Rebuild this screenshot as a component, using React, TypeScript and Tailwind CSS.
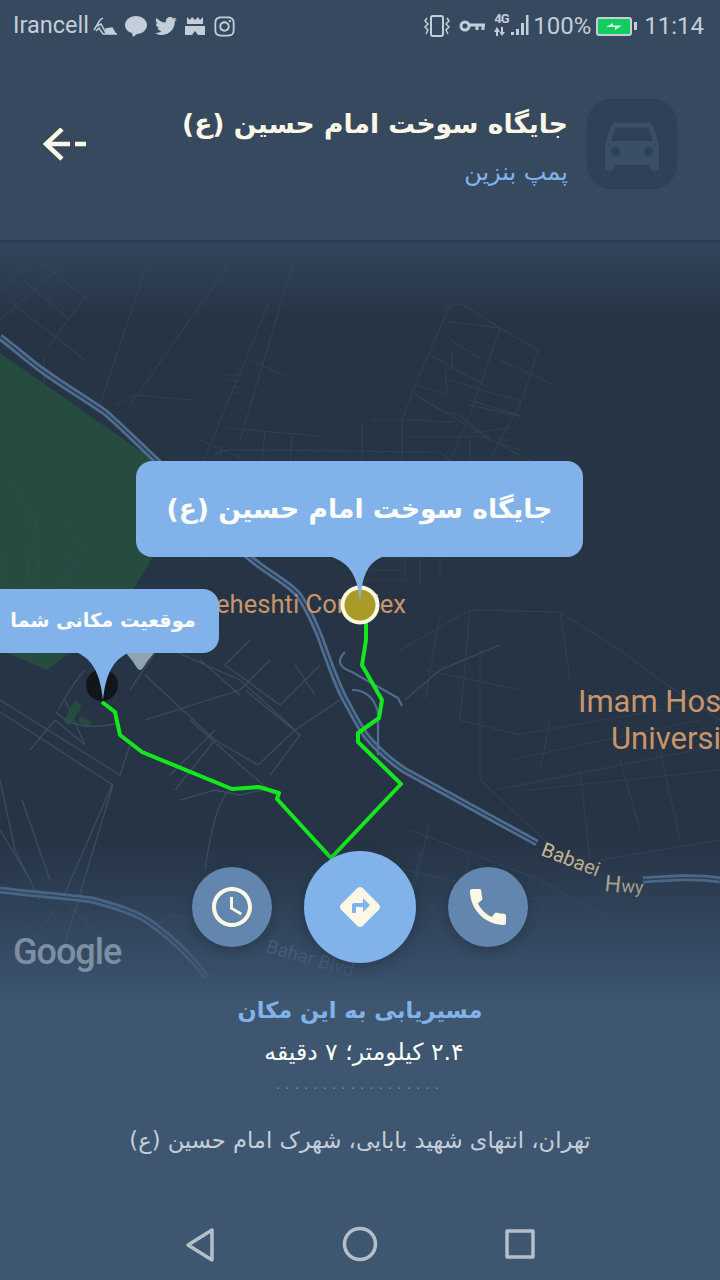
import { MdAccessTime, MdCall, MdDirections, MdDirectionsCar } from "react-icons/md";
import { FaInstagram, FaTwitter } from "react-icons/fa";

const farsi = "font-['DejaVu_Sans',sans-serif]";
const latin = "font-['Roboto',sans-serif]";

const faintRoads = [
  "M0 320 L88 243 M0 290 L50 240 M8 300 L85 360 M24 280 L70 320 M40 262 L88 300 M46 350 L90 290",
  "M44 355 L44 392 M100 405 L145 270 L175 240 M130 405 L225 270 L225 240 M115 405 L135 395 L192 400",
  "M200 470 L270 300 M240 440 L300 240 M200 440 L245 460 M212 480 L262 510 M220 445 L228 500 L205 560",
  "M225 375 L245 375 M228 380 L240 382 M230 386 L240 388 M232 392 L238 394 M250 360 L290 378",
  "M228 428 L318 436 M265 432 L262 461 M292 436 L290 461 M215 455 Q225 448 240 450 L440 452 L455 465",
  "M362 422 L362 462 M372 420 L402 420 L402 461 M402 420 L415 385 L450 305 L462 304 L500 328 L538 350 L522 400 L490 460",
  "M450 322 L500 328 L470 415 L450 460 M450 340 L480 358 M415 385 L448 395 L445 372 L452 368 L452 350",
  "M415 395 L440 410 L460 415 L490 440 L520 450 M413 393 L500 445 L530 460 L530 470 M470 433 L510 428 M468 400 L520 415",
  "M430 355 L490 388 M450 380 L498 395 M470 405 L520 416 M498 395 L520 400 L520 410 M498 440 L510 440",
  "M405 492 L510 490 M405 420 L455 422 M406 437 L490 437 M500 360 L552 384 M405 530 L440 530 M405 555 L405 580 M440 555 L440 580",
  "M470 440 L470 462 M380 558 L420 558 L420 585 M365 580 L405 580 M365 570 L405 570 M400 650 L470 610 L560 612 L620 650",
  "M440 615 L425 700 M470 610 L460 720 L520 735 M620 650 L660 680 L720 720 M560 612 L570 680 M425 670 L520 690 M515 735 L720 700",
  "M480 650 L480 780 L555 850 M550 720 L540 770 M510 760 L700 720 M495 790 L720 745 M530 790 L720 770 M580 770 L590 860",
  "M620 760 L640 830 M660 750 L680 840 M600 860 L720 840 M410 830 L540 880 L610 920 M420 850 L410 900 M430 820 L400 950",
  "M360 860 L540 900 M470 850 L460 910 M0 960 L40 930 L70 890 M20 920 L70 970 M65 900 L120 960 M155 925 L175 915 L260 945",
];

const blockRoads = [
  "M0 700 L120 775 L130 745 M0 712 L113 785 L60 960 M112 785 L62 900 M65 700 L85 745 M30 750 L55 720 L85 745",
  "M130 690 L160 645 L240 680 L295 730 L340 700 M145 675 L215 740 L175 790 M215 740 L258 765 L295 730 M250 640 L225 665 L280 705 L320 665",
  "M145 720 L240 690 L270 660 M245 690 L300 735 L270 775 M170 775 L215 730 M190 720 L240 765 L275 795 M200 660 L240 695 M295 665 L315 695",
  "M180 800 L215 790 L240 795 L262 790 M230 790 Q215 800 205 870 M0 780 L15 850 L40 900 M0 830 L30 880 M22 800 L50 880",
  "M405 700 L440 670 L500 645",
];

const highway =
  "M0 337 C20 352 30 362 46 373 C70 390 88 400 106 413 C125 430 140 445 156 460 C190 495 220 530 250 558 C275 578 292 585 300 597 C310 612 315 625 320 637 C330 665 338 688 347 703 C354 716 360 728 367 737 C380 752 392 762 404 770 L537 843 M643 880 C670 878 695 876 720 880 M0 890 C30 894 65 896 92 900 C115 906 135 912 151 923 C175 940 192 958 207 977";

function MapLayer() {
  return (
    <svg className="absolute inset-0" width="720" height="1280" viewBox="0 0 720 1280">
      <rect width="720" height="1280" fill="#263445" />
      <path d="M0 353 L156 462 L153 557 L133 590 L120 615 L47 670 L0 650 Z" fill="#254c3e" />
      <path d="M0 470 Q30 500 33 540 Q20 590 40 640 M28 500 Q50 560 30 610 M70 520 Q80 560 50 600 Q30 630 20 650 M90 540 Q60 590 30 660 M0 550 Q15 590 5 640" fill="none" stroke="#2f4a4c" strokeWidth="1.5" />
      <path d={faintRoads.join(" ")} fill="none" stroke="#304053" strokeWidth="1.2" />
      <path d={blockRoads.join(" ")} fill="none" stroke="#3a4c61" strokeWidth="1.3" />
      <path d={highway} fill="none" stroke="#4f6d90" strokeWidth="7" />
      <path d={highway} fill="none" stroke="#2b3b4f" strokeWidth="1.6" />
      <path d="M345 652 Q332 665 352 672 L398 698 L402 706 M352 690 Q372 690 378 712 L378 755" fill="none" stroke="#4f6d90" strokeWidth="2.2" />
      <path d="M63 722 L75 700 L82 706 L70 726 Z M80 716 L92 722 L88 728 L78 722 Z" fill="#254c3e" />
      <path d="M58 710 Q75 680 85 670 M56 712 Q75 732 115 724" fill="none" stroke="#3a4c61" strokeWidth="1.3" />
      <text x="216" y="613" fill="#c9956a" fontSize="25.6" fontFamily="Roboto, sans-serif">eheshti Complex</text>
      <text fill="#c9956a" fontSize="31" fontFamily="Roboto, sans-serif">
        <tspan x="578" y="712">Imam Hos</tspan>
        <tspan x="611" y="749">Universi</tspan>
      </text>
      <text x="0" y="0" fill="#d3bd95" fontSize="20" fontFamily="Roboto, sans-serif" transform="translate(540 855) rotate(21)">Babaei</text>
      <text x="604" y="891" fill="#d3bd95" fontSize="23" fontFamily="Roboto, sans-serif" transform="rotate(6 604 891)">H</text>
      <text x="621" y="892" fill="#d3bd95" fontSize="18" fontFamily="Roboto, sans-serif" transform="rotate(4 621 892)">wy</text>
      <text x="265" y="952" fill="#566b82" fontSize="19" fontFamily="Roboto, sans-serif" transform="rotate(16 265 952)">Bahar Blvd</text>
      <path d="M126 653 L154 653 Q147 661 143 668 Q140 672 137 668 Q133 661 126 653 Z" fill="#8fa3b3" />
      <polyline
        points="366,622 366,640 362,665 382,700 379,718 358,733 358,742 401,784 331,858 277,799 279,793 259,787 232,789 142,752 120,735 115,712 102,702"
        fill="none"
        stroke="#14e81c"
        strokeWidth="4"
        strokeLinejoin="round"
      />
      <circle cx="360" cy="605" r="17.5" fill="#a89b28" stroke="#fdf8df" strokeWidth="4" />
      <circle cx="102" cy="685" r="16" fill="#12151a" />
    </svg>
  );
}

function Bubble() {
  return (
    <>
      <div className="absolute left-[136px] top-[461px] w-[447px] h-[96px] rounded-[16px] bg-[#81b3ea] flex items-center justify-center">
        <span dir="rtl" className={`${farsi} text-[26.6px] font-bold text-white`}>جایگاه سوخت امام حسین (ع)</span>
      </div>
      <svg className="absolute left-[332px] top-[556px]" width="50" height="50" viewBox="0 0 50 50">
        <path d="M0 1 L50 1 C38 6 30 16 28 47 C26 16 14 6 0 1 Z" fill="#81b3ea" />
      </svg>
      <div className="absolute left-0 top-[589px] w-[219px] h-[64px] rounded-r-[16px] bg-[#81b3ea] flex items-center justify-center pr-[13px]">
        <span dir="rtl" className={`${farsi} text-[19.3px] font-bold text-white`}>موقعیت مکانی شما</span>
      </div>
      <svg className="absolute left-[78px] top-[652px]" width="50" height="50" viewBox="0 0 50 50">
        <path d="M0 1 L50 1 C36 8 28 20 25 48 C22 20 14 8 0 1 Z" fill="#81b3ea" />
      </svg>
    </>
  );
}

function StatusBar() {
  return (
    <div className={`${latin} h-[52px] flex items-center justify-between pl-[13px] pr-[16px] text-[#c3ced9] text-[24px]`}>
      <div className="flex items-center">
        <span className="text-[23.5px]">Irancell</span>
        <svg className="ml-[3px]" width="26" height="22" viewBox="0 0 26 22" fill="none" stroke="#c3ced9" strokeWidth="1.5">
          <path d="M2 15 L8 5 L11 3 M5 11 L9 9 L14 18 L25 19 L11 19 L7 13 L4 16" />
          <path d="M14 14 L20 13 L23 18 L14 18 Z" fill="#c3ced9" />
        </svg>
        <svg className="ml-[6px]" width="24" height="24" viewBox="0 0 24 24" fill="#c3ced9">
          <path d="M12 2 C18 2 23 6 23 11 C23 16 18 20 13 20 L9 23 L8 19 C4 18 1 15 1 11 C1 6 6 2 12 2 Z" />
        </svg>
        <FaTwitter className="ml-[7px]" size={22} color="#c3ced9" />
        <svg className="ml-[7px]" width="22" height="22" viewBox="0 0 22 22" fill="#c3ced9">
          <path d="M3 2 L6 5 L8 2 L11 5 L14 2 L16 5 L19 2 L19 9 L3 9 Z" />
          <path d="M1 11 L21 11 L21 20 L14 20 L11 16 L8 20 L1 20 Z" />
        </svg>
        <FaInstagram className="ml-[7px]" size={23} color="#c3ced9" />
      </div>
      <div className="flex items-center">
        <svg width="28" height="24" viewBox="0 0 28 24" fill="none" stroke="#c3ced9" strokeWidth="2">
          <rect x="8" y="2" width="12" height="20" rx="2" />
          <path d="M4 4 L2 7 L5 10 L2 13 L5 16 L3 20 M24 4 L26 7 L23 10 L26 13 L23 16 L25 20" strokeWidth="1.5" />
        </svg>
        <svg className="ml-[8px]" width="27" height="14" viewBox="0 0 27 14" fill="none" stroke="#c3ced9" strokeWidth="3">
          <circle cx="6" cy="7" r="4" />
          <path d="M10 6 L26 6 M18 6 L18 11 M24 6 L24 11" />
        </svg>
        <div className="ml-[8px] relative w-[36px] h-[24px]">
          <span className="absolute left-0 top-[-1px] text-[13px] font-bold leading-[12px] tracking-[-1px]">4G</span>
          <svg className="absolute left-0 top-0" width="36" height="24" viewBox="0 0 36 24" fill="#c3ced9">
            <path d="M0 18 L3 13 L6 18 L4 18 L4 22 L2 22 L2 18 Z" />
            <path d="M7 13 L9 13 L9 18 L11 18 L8 22 L5.5 18 L7 18 Z" />
            <rect x="17" y="18" width="3" height="3" />
            <rect x="22" y="15" width="3" height="6" />
            <rect x="27" y="9" width="3" height="12" />
            <rect x="32" y="1" width="2.5" height="20" />
          </svg>
        </div>
        <span className="ml-[3px]">100%</span>
        <div className="ml-[5px] flex items-center">
          <div className="w-[36px] h-[19px] rounded-[3px] border-[2px] border-[#c3ced9] bg-[#0fce5e] flex items-center justify-center">
            <svg width="16" height="9" viewBox="0 0 16 9" fill="#d8f7e4">
              <path d="M0 5 L7 1 L7 3.5 L16 3.5 L9 8 L9 5 Z" />
            </svg>
          </div>
          <div className="w-[3px] h-[8px] bg-[#c3ced9] ml-[2px]" />
        </div>
        <span className="ml-[7px]">11:14</span>
      </div>
    </div>
  );
}

function Header() {
  return (
    <div className="h-[188px] flex items-start justify-between pl-[43px] pr-[43px] pt-[47px] bg-[#36495f] shadow-[0_2px_4px_rgba(20,30,45,0.35)]">
      <svg className="mt-[29px]" width="44" height="34" viewBox="0 0 44 34" fill="none" stroke="#fdf8e6" strokeWidth="4.5">
        <path d="M19 1 L3 16 L19 31" />
        <path d="M3 16 L27 16" />
        <path d="M32 16 L43 16" />
      </svg>
      <div className="flex items-start gap-[19px]">
        <div dir="rtl" className={`${farsi} flex flex-col items-start`}>
          <span className="text-[26.6px] leading-[50px] font-bold text-[#fdf8e6]">جایگاه سوخت امام حسین (ع)</span>
          <span className="mt-[4px] text-[24px] leading-[38px] text-[#81b3ea]">پمپ بنزین</span>
        </div>
        <div className="w-[90px] h-[90px] rounded-[24px] bg-[#2f4156] flex items-center justify-center">
          <MdDirectionsCar size={72} color="#3a4e64" />
        </div>
      </div>
    </div>
  );
}

function ActionButtons() {
  return (
    <div className="flex items-center justify-center gap-[32px]">
      <div className="w-[80px] h-[80px] rounded-full bg-[#6286ae] flex items-center justify-center shadow-[0_4px_12px_rgba(20,30,45,0.3)]">
        <MdAccessTime size={48} color="#fdf8e6" />
      </div>
      <div className="w-[112px] h-[112px] rounded-full bg-[#81b3ea] flex items-center justify-center shadow-[0_4px_14px_rgba(20,30,45,0.35)]">
        <MdDirections size={48} color="#fdf8e6" />
      </div>
      <div className="w-[80px] h-[80px] rounded-full bg-[#6286ae] flex items-center justify-center shadow-[0_4px_12px_rgba(20,30,45,0.3)]">
        <MdCall size={48} color="#fdf8e6" />
      </div>
    </div>
  );
}

function Details() {
  return (
    <div dir="rtl" className={`${farsi} flex flex-col items-center`}>
      <span className="mt-[29px] text-[22.5px] leading-[36px] font-bold text-[#81b3ea]">مسیریابی به این مکان</span>
      <span className="mt-[8px] pl-[8px] text-[23.5px] leading-[32px] text-white">۲.۴ کیلومتر؛ ۷ دقیقه</span>
      <span className="mt-[6px] text-[13px] leading-[22px] tracking-[5.2px] text-[#7f91a3]">..................</span>
      <span className="mt-[27px] text-[22.6px] leading-[34px] text-[#c3ced9]">تهران، انتهای شهید بابایی، شهرک امام حسین (ع)</span>
    </div>
  );
}

function NavBar() {
  return (
    <div className="mt-auto h-[90px] flex items-start justify-center gap-[111px] pt-[36px]">
      <svg width="49" height="36" viewBox="0 0 49 36" fill="none" stroke="#b5bfc9" strokeWidth="3.5" strokeLinejoin="round">
        <path d="M30 4 L30 34 L6 19 Z" />
      </svg>
      <svg width="36" height="36" viewBox="0 0 36 36" fill="none" stroke="#b5bfc9" strokeWidth="3.5">
        <circle cx="18" cy="18" r="15.5" />
      </svg>
      <svg width="49" height="36" viewBox="0 0 49 36" fill="none" stroke="#b5bfc9" strokeWidth="3.5" strokeLinejoin="round">
        <rect x="18" y="5" width="26" height="26" />
      </svg>
    </div>
  );
}

export default function App() {
  return (
    <div className="relative w-[720px] h-[1280px] overflow-hidden bg-[#263445]">
      <MapLayer />
      <div className="absolute left-0 right-0 top-[240px] h-[80px] bg-gradient-to-b from-[#32465c] to-transparent" />
      <div className="absolute left-0 right-0 top-[840px] h-[160px] bg-gradient-to-b from-transparent to-[#3c5470]" />
      <div className="absolute left-0 right-0 top-[1000px] bottom-0 bg-[#3e566f]" />
      <span className={`${latin} absolute left-[13px] top-[931px] text-[36px] leading-[42px] font-medium tracking-[-1px] text-[#7d8fa2]`}>Google</span>
      <Bubble />
      <div className="relative flex flex-col h-full">
        <div className="bg-[#36495f]">
          <StatusBar />
        </div>
        <Header />
        <div className="mt-[611px]">
          <ActionButtons />
        </div>
        <Details />
        <NavBar />
      </div>
    </div>
  );
}
